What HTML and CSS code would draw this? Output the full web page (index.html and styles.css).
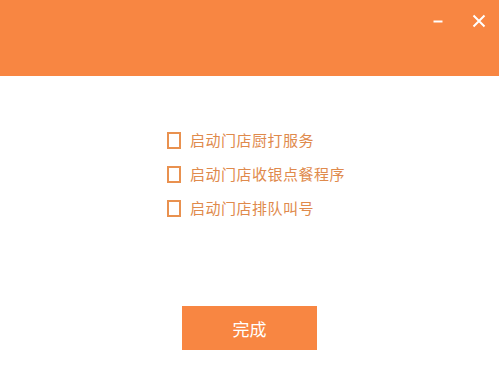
FILE: index.html
```html
<!DOCTYPE html>
<html lang="zh-CN">
<head>
<meta charset="utf-8">
<title>启动设置</title>
<link rel="stylesheet" href="styles.css">
</head>
<body>
<div class="window">
  <header class="titlebar">
    <button class="ctrl minimize" aria-label="最小化">
      <svg width="12" height="12" viewBox="0 0 12 12"><path d="M1.5 6.5h9" stroke="#fff" stroke-width="2"/></svg>
    </button>
    <button class="ctrl close" aria-label="关闭">
      <svg width="14" height="14" viewBox="0 0 14 14"><path d="M1.5 1.5l11 11M12.5 1.5l-11 11" stroke="#fff" stroke-width="2"/></svg>
    </button>
  </header>
  <main class="content">
    <ul class="options">
      <li class="option"><span class="box"></span><span class="label">启动门店厨打服务</span></li>
      <li class="option"><span class="box"></span><span class="label">启动门店收银点餐程序</span></li>
      <li class="option"><span class="box"></span><span class="label">启动门店排队叫号</span></li>
    </ul>
    <div class="actions">
      <button class="done">完成</button>
    </div>
  </main>
</div>
</body>
</html>
```

FILE: styles.css
```css
* { box-sizing: border-box; }
html, body {
  margin: 0;
  padding: 0;
  background: #fff;
}
body {
  font-family: "Noto Sans CJK SC", "Microsoft YaHei", sans-serif;
}
.window {
  width: 499px;
  height: 377px;
  display: flex;
  flex-direction: column;
}
.titlebar {
  height: 76px;
  background: #f88642;
  display: flex;
  justify-content: flex-end;
  align-items: flex-start;
  padding: 14px 9px 0 0;
  gap: 19px;
}
.ctrl {
  border: 0;
  background: transparent;
  padding: 0;
  width: 22px;
  height: 14px;
  display: flex;
  align-items: center;
  justify-content: center;
  cursor: pointer;
}
.content {
  flex: 1;
  display: flex;
  flex-direction: column;
}
.options {
  list-style: none;
  margin: 0;
  padding: 47px 0 0 167px;
}
.option {
  height: 34px;
  display: flex;
  align-items: center;
  gap: 9px;
}
.box {
  width: 14px;
  height: 17px;
  border: 2px solid #e9914f;
}
.label {
  font-size: 15px;
  letter-spacing: 0.5px;
  color: #df8a4c;
  line-height: 20px;
}
.actions {
  display: flex;
  justify-content: center;
  padding-top: 81px;
}
.done {
  width: 135px;
  height: 44px;
  border: 0;
  background: #f88642;
  color: #fff;
  font-family: inherit;
  font-size: 17px;
  cursor: pointer;
}
```
